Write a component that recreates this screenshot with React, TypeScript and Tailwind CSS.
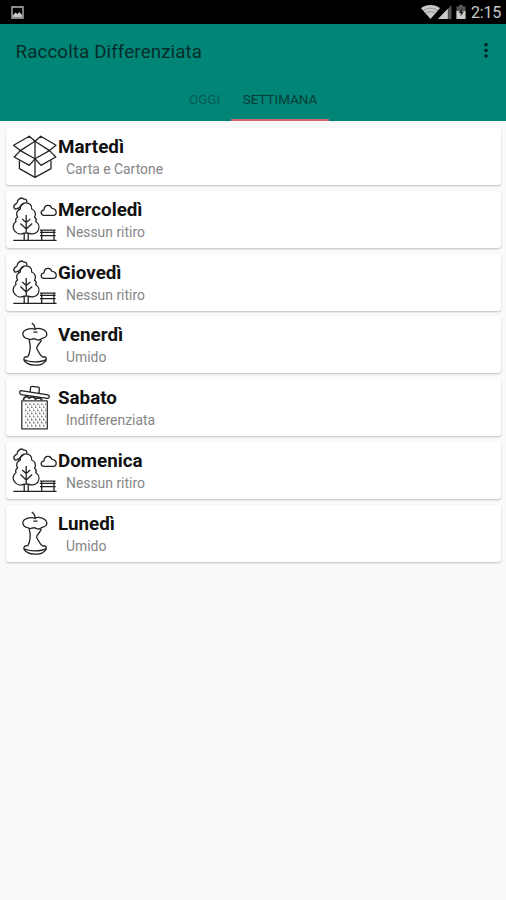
import type { ReactNode } from "react";

type Kind = "box" | "park" | "apple" | "bin";

const days: { day: string; what: string; icon: Kind }[] = [
  { day: "Martedì", what: "Carta e Cartone", icon: "box" },
  { day: "Mercoledì", what: "Nessun ritiro", icon: "park" },
  { day: "Giovedì", what: "Nessun ritiro", icon: "park" },
  { day: "Venerdì", what: "Umido", icon: "apple" },
  { day: "Sabato", what: "Indifferenziata", icon: "bin" },
  { day: "Domenica", what: "Nessun ritiro", icon: "park" },
  { day: "Lunedì", what: "Umido", icon: "apple" },
];

const drawings: Record<Kind, ReactNode> = {
  box: (
    <>
      <path d="M25 9.2 19.3 4.2 3.6 13.2 10.3 18.6 25 9.2 30.7 4.2 46 13.2 39.5 18.6Z" />
      <path d="M10.3 18.6 4.2 25 19.3 33.4 25 26.8ZM39.5 18.6 45.8 25 31 33.4 25 26.8Z" />
      <path d="M9.4 28.5V36.6L25 45.4 41 36.6V28.5M25 9.2V45.4" />
    </>
  ),
  park: (
    <>
      <path d="M9.8 15 7.6 13.2C5.5 15.8 2.4 12.4 4.7 9.8 5.2 8.8 6.6 8.6 7 8 7.2 4.5 11.5 1.2 13.8 4.2 16.4 3.9 17.4 5.6 16.6 7.6M8.2 13.4 13.8 8.2" />
      <path d="M16 7.8C12 7.8 9.6 10.6 10.4 14 6.8 15.2 5.5 19 7.7 22 5.6 23.3 5.3 25 6 26.8 2.6 28.7 2.3 33.4 4.8 36 7 39.3 11 39.6 14 38.1H18.4C22 39.7 26.2 38.8 28 35.8 30 32.2 28.8 28.6 25.8 26.8 26.7 24.8 26 23.2 24.5 22 26.5 18.6 25 15.2 21.7 14 22.2 10.6 19.8 7.8 16 7.8Z" />
      <path d="M16.2 20V38M16.2 27.5 12.2 24M16.2 27.5 20.3 24M16.2 34 10.4 28.6M16.2 34 22.2 28.6M14.2 38V45M18.2 38V45" />
      <path d="M3.3 45.3H46.6M30 35.2H45.6M30 37.4H45.6M30 40.7H45.6M31.7 35V45M44 35V45" />
      <path d="M34 20.3C30.5 20.3 30 15.5 34 14.8 34.3 9.8 40.2 8.7 41.9 13.4 44.7 13.4 46.6 15.5 46.2 18 46 19.4 45 20.3 43.4 20.3Z" />
    </>
  ),
  apple: (
    <>
      <path d="M21.8 3.2C24 4.3 25.1 6.5 25.3 10.3M24.9 9.1C20 7.7 13 9.5 12.8 13.7 13 17 15.5 18.5 18.3 18.8 20.3 21 22.5 18 25 18.9 27.8 20 29.4 21.2 31.5 18.7 34.8 18 37.2 16.5 36.8 13.7 36 9.5 29 7.4 24.9 9.1Z" />
      <path d="M23.4 12.2H27.5M19.2 20C20.8 26 20.6 32 17.6 37.3M31.3 20C30.3 23.7 26.7 25 26.6 28.6 28.6 31 28.8 34.4 32.7 37.3" />
      <path d="M17.6 37C15.4 36.2 13.3 37.6 14 40 14.4 42 16.3 42.3 17.3 43.4 21 45.8 29.8 45.8 33 43.4 34.2 42.2 36 42 36.2 39.6 36.6 37.3 34.6 36.1 32.7 37.2" />
      <path d="M14.5 39.8C19 42.5 31 42.5 36 39.6" />
    </>
  ),
  bin: (
    <>
      <path d="M11.8 17.8H37.3V45.9H11.8Z" stroke="#333" />
      <path d="M11 7.6 38 11.8C39.9 12.3 39.6 15.6 37.4 15.4L11.3 11.7C9.2 11.2 9.3 7.6 11 7.6ZM20.2 8.9 20.6 4.4C20.7 3.6 21.2 3.2 22 3.3L28 4.1C29.1 4.3 29.5 4.9 29.3 6L29 10.1" stroke="#222" />
      <path d="M13.4 17.2C13.8 13.4 16.7 12.6 19.2 15.2 21.3 13.2 24.1 13.4 25.5 16 28 14 30.5 14.7 32 17.2" strokeWidth="1.8" />
      <path d="M15 21.2H36M17 24.3H36M15 27.4H36M17 30.5H36M15 33.6H36M17 36.7H36M15 39.8H36M17 42.9H36" stroke="#777" strokeWidth="1.5" strokeDasharray="1.5 2.5" />
      <path d="M17 22.7H35M15 25.8H36M17 29H35M15 32H36M17 35.2H35M15 38.2H36M17 41.3H35" stroke="#aaa" strokeWidth="1" strokeDasharray="1 3" />
    </>
  ),
};

function Drawing({ kind }: { kind: Kind }) {
  return (
    <svg className="mt-1 ml-1 size-12 shrink-0" viewBox="0 0 48 48" fill="none" stroke="#222" strokeWidth="1.3" strokeLinejoin="round">
      {drawings[kind]}
    </svg>
  );
}

export default function App() {
  return (
    <div className="flex h-[900px] w-[506px] flex-col overflow-hidden bg-[#fafafa] font-[Roboto,sans-serif]">
      <div className="flex h-6 shrink-0 items-center bg-black pr-1 pl-[11px]">
        <svg className="h-[13px] w-[13px]" viewBox="0 0 13 13">
          <path d="M1 1H12V12H1Z" fill="none" stroke="#b5b5b5" strokeWidth="1.4" />
          <path d="M2 11V9L4.5 6.5 6.5 8 8.5 6 11 9V11Z" fill="#c4c4c4" />
        </svg>
        <svg className="ml-auto h-4 w-[47px]" viewBox="0 0 47 16">
          <path d="M0 4.2C5-.2 14-.2 19 4.2L9.5 15Z" fill="#c9c9c9" />
          <path d="M2 6.8C6.5 3.4 12.5 3.4 17 6.8M4.3 9.4C7.5 7.2 11.5 7.2 14.7 9.4" fill="none" stroke="#777" strokeWidth=".7" />
          <path d="M30.5 1V15H17Z" fill="#555" />
          <path d="M26.8 4.8V15H17Z" fill="#c9c9c9" />
          <path d="M35.5 2.5H38V1H42V2.5H44.5V15H35.5Z" fill="#555" />
          <path d="M35.5 7H44.5V15H35.5Z" fill="#ccc" />
          <path d="M41 4 37.7 9H39.7V12.3L43 7.6H41Z" fill="#222" />
        </svg>
        <span className="ml-[3px] w-[31px] pt-0.5 text-[16px] leading-[22px] tracking-[-0.2px] whitespace-nowrap text-[#c8c8c8]">2:15</span>
      </div>
      <header className="flex h-[97px] shrink-0 flex-col bg-[#008577]">
        <div className="flex h-[54px] items-center justify-between pr-[17px] pl-[15.5px]">
          <h1 className="pt-0.5 text-[18.8px] leading-6 tracking-[0.1px] text-[#052d29]">Raccolta Differenziata</h1>
          <svg className="mb-[3px] h-4 w-[6px]" viewBox="0 0 6 16" fill="#06211f">
            <circle cx="3" cy="2.7" r="1.75" />
            <circle cx="3" cy="8.4" r="1.75" />
            <circle cx="3" cy="14.1" r="1.75" />
          </svg>
        </div>
        <nav className="flex h-[43px] pl-[178px] text-[13.4px] leading-4">
          <div className="flex w-[53px] justify-center pt-[14px] text-[#045b53]">OGGI</div>
          <div className="flex w-[98px] justify-center border-b-2 border-[#d16572] pt-[14px] text-[#043a35]">SETTIMANA</div>
        </nav>
      </header>
      <main className="flex flex-col gap-[5.8px] pt-[7.1px] pr-[5px] pl-1.5">
        {days.map(({ day, what, icon }) => (
          <section key={day} className="flex h-[57px] rounded-[3px] bg-white shadow-[0_1px_2px_rgba(0,0,0,0.24)]">
            <Drawing kind={icon} />
            <div className="pt-[7px]">
              <h2 className="text-[18.8px] leading-6 font-bold text-[#111]">{day}</h2>
              <p className="pl-2 text-[13.9px] leading-5 text-[#868686]">{what}</p>
            </div>
          </section>
        ))}
      </main>
    </div>
  );
}
